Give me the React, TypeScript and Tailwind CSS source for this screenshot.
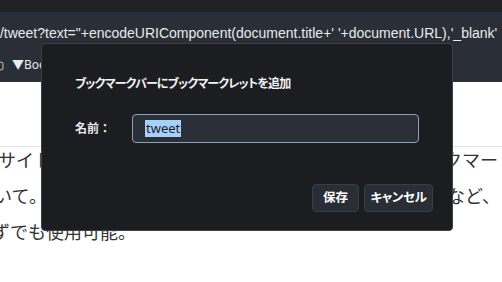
import { Folder } from 'lucide-react';

const font = "font-['Noto_Sans','Noto_Sans_CJK_JP',sans-serif]";

export default function App() {
  return (
    <div className={`relative w-[502px] h-[282px] overflow-hidden bg-white ${font}`}>
      {/* ブラウザ上部 */}
      <div className="h-[12px] bg-[#1f2125]" />
      <div className="h-[70px] bg-[#2a2f37] flex flex-col">
        <div className="h-[40px] flex items-center whitespace-nowrap text-[14px] font-['Liberation_Sans',sans-serif] text-[#e8eaed] ml-[-4px] pt-[2px]">
          t/tweet?text="+encodeURIComponent(document.title+' '+document.URL),'_blank'
        </div>
        <div className="flex items-center gap-[8px] text-[12px] text-[#e8eaed] ml-[-9px] mt-[4px]">
          <Folder className="w-[13px] h-[13px]" strokeWidth={1.5} />
          <span>▼Bookmarklet</span>
        </div>
      </div>

      {/* 本文 */}
      <div className="mt-[64px] border-t border-[#e3e3e3]">
        <div className="mt-[-5px] text-[18px] text-[#333] leading-[36px]">
          <div className="flex justify-between whitespace-nowrap">
            <span className="ml-[-2px]">サイトをツイートするブ</span>
            <span className="mr-[4px]">クマー</span>
          </div>
          <div className="flex justify-between whitespace-nowrap">
            <span className="ml-[-6px]">いて。ブックマークレット</span>
            <span className="mr-[2px]">など、</span>
          </div>
          <div className="whitespace-nowrap ml-[-8px]">ずでも使用可能。</div>
        </div>
      </div>

      {/* ダイアログ */}
      <div className="absolute left-[41px] top-[43px] w-[412px] h-[188px] bg-[#1c1d21] border border-[#3d4046] rounded-[4px] flex flex-col pl-[33px] pr-[19px] pt-[30px]">
        <div className="text-[12px] font-bold text-[#f1f3f4] leading-[20px] tracking-[-0.8px] [font-feature-settings:'palt']">
          ブックマークバーにブックマークレットを追加
        </div>
        <div className="flex items-center mt-[20px]">
          <span className="w-[57px] text-[12px] text-[#e8eaed] font-bold">名前：</span>
          <div className="w-[287px] h-[29px] rounded-[4px] border border-[#8aa3bd] bg-[#2a2f38] flex items-center pl-[12px]">
            <span className="bg-[#a6d1ff] text-[#1f1f1f] text-[13px] leading-[17px] px-[1px]">tweet</span>
          </div>
        </div>
        <div className="flex justify-end gap-[5px] mt-[41px] [font-feature-settings:'palt']">
          <button className="w-[47px] h-[28px] rounded-[4px] bg-[#292d35] border border-[#3a3e45] text-white text-[12.5px] font-bold">
            保存
          </button>
          <button className="w-[69px] h-[28px] rounded-[4px] bg-[#292d35] border border-[#3a3e45] text-white text-[12.5px] font-bold tracking-[-0.3px]">
            キャンセル
          </button>
        </div>
      </div>
    </div>
  );
}
